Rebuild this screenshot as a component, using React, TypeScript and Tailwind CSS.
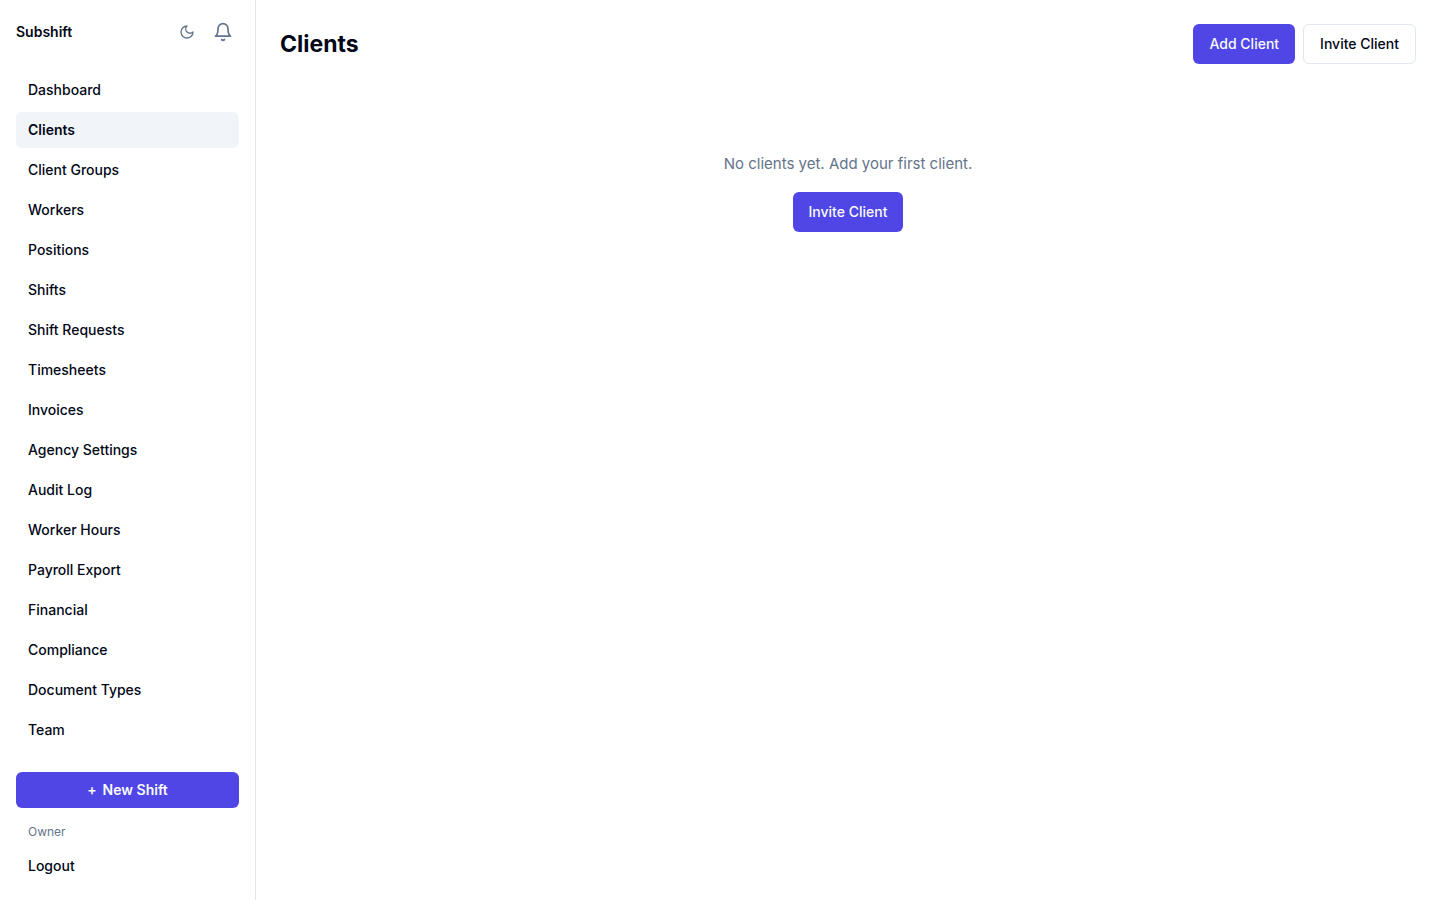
const menu = [
  { name: "Dashboard", href: "#dashboard" },
  { name: "Clients", href: "#clients", active: true },
  { name: "Client Groups", href: "#client-groups" },
  { name: "Workers", href: "#workers" },
  { name: "Positions", href: "#positions" },
  { name: "Shifts", href: "#shifts" },
  { name: "Shift Requests", href: "#shift-requests" },
  { name: "Timesheets", href: "#timesheets" },
  { name: "Invoices", href: "#invoices" },
  { name: "Agency Settings", href: "#agency-settings" },
  { name: "Audit Log", href: "#audit-log" },
  { name: "Worker Hours", href: "#worker-hours" },
  { name: "Payroll Export", href: "#payroll-export" },
  { name: "Financial", href: "#financial" },
  { name: "Compliance", href: "#compliance" },
  { name: "Document Types", href: "#document-types" },
  { name: "Team", href: "#team" },
];

function MoonIcon() {
  return (
    <svg className="size-4" viewBox="0 0 24 24" fill="none" stroke="currentColor" strokeWidth="2" strokeLinecap="round" strokeLinejoin="round" aria-hidden="true">
      <path d="M12 3a6 6 0 0 0 9 9 9 9 0 1 1-9-9Z" />
    </svg>
  );
}

function BellIcon() {
  return (
    <svg className="size-5" viewBox="0 0 24 24" fill="none" stroke="currentColor" strokeWidth="2" strokeLinecap="round" strokeLinejoin="round" aria-hidden="true">
      <path d="M6 8a6 6 0 0 1 12 0c0 7 3 9 3 9H3s3-2 3-9" />
      <path d="M10.3 21a1.94 1.94 0 0 0 3.4 0" />
    </svg>
  );
}

function Sidebar() {
  return (
    <aside className="flex w-64 shrink-0 flex-col border-r border-[#e2e8f0] p-4">
      <div className="mb-6 flex items-center justify-between">
        <span className="text-sm font-semibold">Subshift</span>
        <div className="flex items-center gap-1 text-[#64748b]">
          <button type="button" aria-label="Toggle theme" className="flex size-8 items-center justify-center rounded-md hover:bg-[#f1f5f9]">
            <MoonIcon />
          </button>
          <button type="button" aria-label="Notifications" className="flex size-8 items-center justify-center rounded-md hover:bg-[#f1f5f9]">
            <BellIcon />
          </button>
        </div>
      </div>

      <nav className="flex flex-1 flex-col gap-1">
        {menu.map((item) => (
          <a
            key={item.name}
            href={item.href}
            aria-current={item.active ? "page" : undefined}
            className={`rounded-md px-3 py-2 text-sm ${
              item.active ? "bg-[#f1f5f9] font-semibold" : "font-medium hover:bg-[#f1f5f9]"
            }`}
          >
            {item.name}
          </a>
        ))}
      </nav>

      <div className="flex flex-col pt-6">
        <button type="button" className="flex items-center justify-center gap-1.5 rounded-md bg-[#4f46e5] px-3 py-2 text-sm font-semibold text-[#f8fafc]">
          <span>+</span>
          New Shift
        </button>
        <p className="mt-4 px-3 text-xs text-[#64748b]">Owner</p>
        <button type="button" className="mt-2 rounded-md px-3 py-2 text-left text-sm font-medium hover:bg-[#f1f5f9]">
          Logout
        </button>
      </div>
    </aside>
  );
}

export default function App() {
  return (
    <div className="flex min-h-screen bg-white font-['Inter',sans-serif] text-[#020817]">
      <Sidebar />
      <main className="flex-1 p-6">
        <div className="flex items-center justify-between">
          <h1 className="text-[23px] leading-8 font-bold">Clients</h1>
          <div className="flex gap-2">
            <button type="button" className="h-10 rounded-md bg-[#4f46e5] px-4 text-sm font-medium text-[#f8fafc]">
              Add Client
            </button>
            <button type="button" className="h-10 rounded-md border border-[#e2e8f0] px-4 text-sm font-medium">
              Invite Client
            </button>
          </div>
        </div>

        <div className="flex flex-col items-center gap-4 pt-22">
          <p className="text-[15px] leading-6 text-[#64748b]">No clients yet. Add your first client.</p>
          <button type="button" className="h-10 rounded-md bg-[#4f46e5] px-4 text-sm font-medium text-[#f8fafc]">
            Invite Client
          </button>
        </div>
      </main>
    </div>
  );
}
